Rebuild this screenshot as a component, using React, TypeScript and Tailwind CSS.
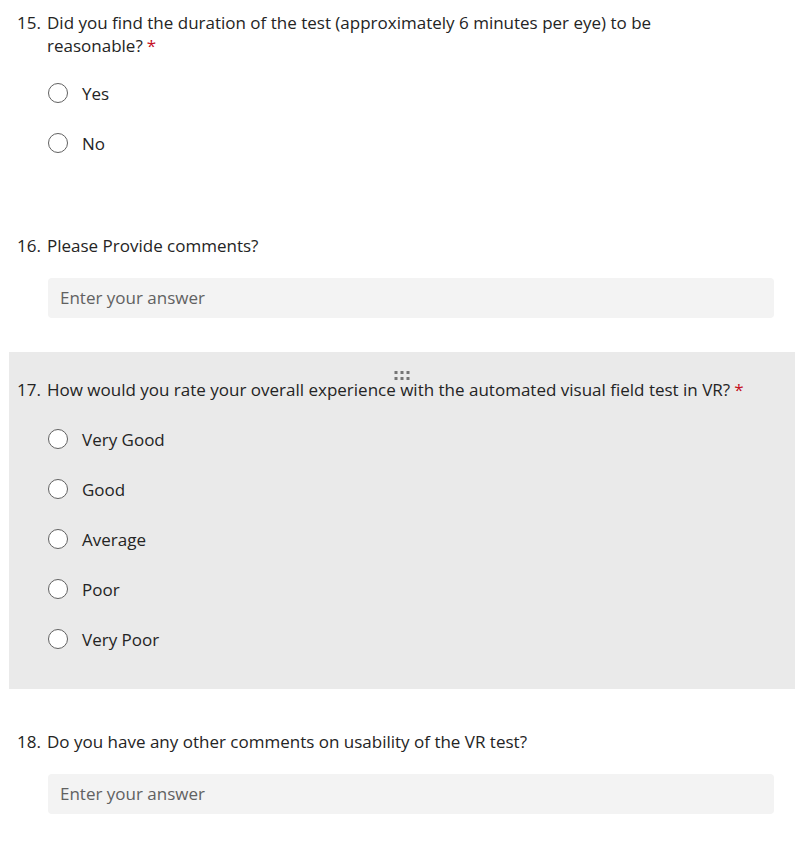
import React from "react";

type ChoiceProps = { label: string };

function Choice({ label }: ChoiceProps) {
  return (
    <label className="flex items-center h-[50px] pl-[31px] cursor-pointer">
      <span className="w-[20px] h-[20px] rounded-full border border-[#616161] bg-white shrink-0" />
      <span className="ml-[14px] text-[17px] leading-[23px] text-[#242424]">{label}</span>
    </label>
  );
}

function TextAnswer() {
  return (
    <div className="ml-[31px] mr-[13px] h-[40px] rounded-[4px] bg-[#f3f3f3] flex items-center px-3">
      <span className="text-[17px] text-[#616161]">Enter your answer</span>
    </div>
  );
}

function DragHandle() {
  return (
    <div className="absolute left-1/2 top-[19px] -translate-x-1/2 grid grid-cols-3 gap-[3px]">
      {[0, 1, 2, 3, 4, 5].map((i) => (
        <span key={i} className="w-[3px] h-[3px] bg-[#757575]" />
      ))}
    </div>
  );
}

export default function App() {
  return (
    <div
      className="w-[810px] min-h-[844px] bg-white text-[#242424]"
      style={{ fontFamily: '"Open Sans", "Noto Sans", sans-serif' }}
    >
      {/* question 15 */}
      <div className="ml-[9px] mr-[15px] px-[8px] pt-[11px]">
        <div className="flex text-[17px] leading-[23px]">
          <span className="w-[30px] shrink-0">15.</span>
          <span>
            Did you find the duration of the test (approximately 6 minutes per eye) to be
            <br />
            reasonable?
            <span className="text-[#c50f1f] ml-[4px]">*</span>
          </span>
        </div>
        <div className="mt-[11px]">
          <Choice label="Yes" />
          <Choice label="No" />
        </div>
      </div>

      {/* question 16 */}
      <div className="ml-[9px] mr-[15px] px-[8px] mt-[66px]">
        <div className="flex text-[17px] leading-[23px]">
          <span className="w-[30px] shrink-0">16.</span>
          <span>Please Provide comments?</span>
        </div>
        <div className="mt-[21px]">
          <TextAnswer />
        </div>
      </div>

      {/* question 17 */}
      <div className="relative ml-[9px] mr-[15px] px-[8px] mt-[34px] bg-[#eaeaea] pt-[26px] pb-[25px]">
        <DragHandle />
        <div className="flex text-[17px] leading-[23px]">
          <span className="w-[30px] shrink-0">17.</span>
          <span>
            How would you rate your overall experience with the automated visual field test in VR?
            <span className="text-[#c50f1f] ml-[4px]">*</span>
          </span>
        </div>
        <div className="mt-[13px]">
          <Choice label="Very Good" />
          <Choice label="Good" />
          <Choice label="Average" />
          <Choice label="Poor" />
          <Choice label="Very Poor" />
        </div>
      </div>

      {/* question 18 */}
      <div className="ml-[9px] mr-[15px] px-[8px] mt-[41px]">
        <div className="flex text-[17px] leading-[23px]">
          <span className="w-[30px] shrink-0">18.</span>
          <span>Do you have any other comments on usability of the VR test?</span>
        </div>
        <div className="mt-[21px]">
          <TextAnswer />
        </div>
      </div>
    </div>
  );
}
